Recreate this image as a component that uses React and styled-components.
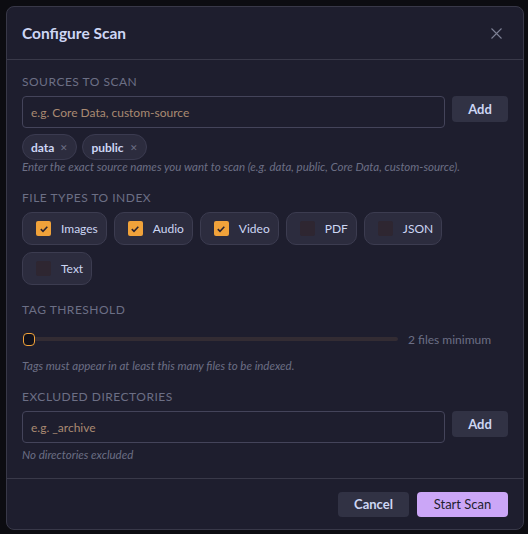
import React from 'react'
import styled, { createGlobalStyle } from 'styled-components'

const GlobalStyle = createGlobalStyle`
    html, body {
        margin: 0;
        padding: 0;
        background: #0c0c11;
    }
    body {
        font-family: Lato, "Liberation Sans", sans-serif;
        color: #cdd6f4;
    }
`

const sources = ['data', 'public']

const fileTypes = [
    { label: 'Images', checked: true },
    { label: 'Audio', checked: true },
    { label: 'Video', checked: true },
    { label: 'PDF', checked: false },
    { label: 'JSON', checked: false },
    { label: 'Text', checked: false },
]

const App = () => {
    return (
        <>
            <GlobalStyle />
            <Page>
                <Modal>
                    <Header>
                        <h2>Configure Scan</h2>
                        <CloseButton aria-label="Close">
                            <svg width="11" height="11" viewBox="0 0 11 11">
                                <path d="M0.5 0.5L10.5 10.5M10.5 0.5L0.5 10.5" stroke="currentColor" strokeWidth="1.1" fill="none" />
                            </svg>
                        </CloseButton>
                    </Header>

                    <Body>
                        <Section>
                            <Label>Sources to scan</Label>
                            <InputRow>
                                <TextInput placeholder="e.g. Core Data, custom-source" />
                                <SmallButton>Add</SmallButton>
                            </InputRow>
                            <Chips>
                                {sources.map(s => (
                                    <Chip key={s}>
                                        {s}
                                        <span>&#x2715;</span>
                                    </Chip>
                                ))}
                            </Chips>
                            <Hint $tight>Enter the exact source names you want to scan (e.g. data, public, Core Data, custom-source).</Hint>
                        </Section>

                        <Section>
                            <Label>File types to index</Label>
                            <Toggles>
                                {fileTypes.map(t => (
                                    <Toggle key={t.label}>
                                        <Box $checked={t.checked}>
                                            {t.checked && (
                                                <svg width="10" height="10" viewBox="0 0 10 10">
                                                    <path d="M1.8 5.2L4 7.3L8.3 2.8" stroke="#2a2230" strokeWidth="1.6" fill="none" />
                                                </svg>
                                            )}
                                        </Box>
                                        {t.label}
                                    </Toggle>
                                ))}
                            </Toggles>
                        </Section>

                        <Section>
                            <Label>Tag threshold</Label>
                            <SliderRow>
                                <Slider>
                                    <Thumb />
                                    <Track />
                                </Slider>
                                <SliderValue>2 files minimum</SliderValue>
                            </SliderRow>
                            <Hint>Tags must appear in at least this many files to be indexed.</Hint>
                        </Section>

                        <Section>
                            <Label>Excluded directories</Label>
                            <InputRow>
                                <TextInput placeholder="e.g. _archive" />
                                <SmallButton>Add</SmallButton>
                            </InputRow>
                            <Hint>No directories excluded</Hint>
                        </Section>
                    </Body>

                    <Footer>
                        <FooterButton>Cancel</FooterButton>
                        <FooterButton $primary>Start Scan</FooterButton>
                    </Footer>
                </Modal>
            </Page>
        </>
    )
}

const Page = styled.div`
    width: 528px;
    height: 534px;
    padding: 6px 4px 4px 6px;
    box-sizing: border-box;
`

const Modal = styled.div`
    width: 518px;
    height: 524px;
    box-sizing: border-box;
    background: #1e1e2e;
    border: 1px solid #383848;
    border-radius: 8px;
    display: flex;
    flex-direction: column;
    overflow: hidden;
`

const Header = styled.div`
    height: 53px;
    box-sizing: border-box;
    padding: 0 21px 0 15px;
    display: flex;
    align-items: center;
    justify-content: space-between;
    border-bottom: 1px solid #393949;

    h2 {
        margin: 0;
        font-size: 15.5px;
        font-weight: 700;
        color: #cdd6f4;
    }
`

const CloseButton = styled.button`
    background: none;
    border: none;
    padding: 0;
    color: #7c7f93;
    display: flex;
    cursor: pointer;
`

const Body = styled.div`
    flex: 1;
    padding: 14px 15px 0;
    display: flex;
    flex-direction: column;
    gap: 17px;
`

const Section = styled.div`
    display: flex;
    flex-direction: column;
    gap: 6px;
`

const Label = styled.div`
    font-size: 12px;
    line-height: 16px;
    text-transform: uppercase;
    letter-spacing: 0.5px;
    color: #6c6f85;
`

const InputRow = styled.div`
    display: flex;
    align-items: flex-start;
    gap: 7px;
`

const TextInput = styled.input`
    flex: 1;
    height: 32px;
    box-sizing: border-box;
    background: #1e1e2e;
    border: 1px solid #44445a;
    border-radius: 4px;
    padding: 0 8px;
    font-family: Lato, "Liberation Sans", sans-serif;
    font-size: 12px;
    color: #cdd6f4;
    outline: none;

    &::placeholder {
        color: #a98a72;
    }
`

const SmallButton = styled.button`
    width: 56px;
    height: 26px;
    border: none;
    border-radius: 4px;
    background: #313244;
    color: #cdd6f4;
    font-family: Lato, "Liberation Sans", sans-serif;
    font-size: 13px;
    font-weight: 700;
    cursor: pointer;
`

const Chips = styled.div`
    display: flex;
    gap: 5px;
`

const Chip = styled.div`
    height: 26px;
    box-sizing: border-box;
    padding: 0 8px;
    display: flex;
    align-items: center;
    gap: 6px;
    background: #2c2c3e;
    border: 1px solid #3b3b50;
    border-radius: 13px;
    font-size: 12px;
    font-weight: 700;
    color: #cdd6f4;

    span {
        font-size: 9px;
        font-weight: 400;
        color: #6c6f85;
    }
`

const Hint = styled.div`
    font-size: 11.5px;
    line-height: 12px;
    font-style: italic;
    color: #6c6f85;
    margin-top: ${p => (p.$tight ? '-5px' : '0')};
`

const Toggles = styled.div`
    display: flex;
    flex-wrap: wrap;
    gap: 7px;
`

const Toggle = styled.label`
    height: 33px;
    box-sizing: border-box;
    padding: 0 8px 0 13px;
    display: flex;
    align-items: center;
    gap: 10px;
    background: #2c2c3e;
    border: 1px solid #3c3c50;
    border-radius: 10px;
    font-size: 12px;
    color: #cdd6f4;
`

const Box = styled.span`
    width: 15px;
    height: 15px;
    border-radius: 2px;
    display: flex;
    align-items: center;
    justify-content: center;
    background: ${p => (p.$checked ? '#f0a23a' : '#2e2631')};
`

const SliderRow = styled.div`
    display: flex;
    align-items: center;
    gap: 10px;
    height: 30px;
`

const Slider = styled.div`
    flex: 1;
    display: flex;
    align-items: center;
    padding-left: 1px;
`

const Thumb = styled.div`
    width: 12px;
    height: 13px;
    box-sizing: border-box;
    border: 1.5px solid #f0a23a;
    border-radius: 4px;
    background: #11111b;
`

const Track = styled.div`
    flex: 1;
    height: 4px;
    background: #332c33;
    border-radius: 0 2px 2px 0;
`

const SliderValue = styled.div`
    font-size: 12px;
    color: #6c6f85;
    width: 100px;
`

const Footer = styled.div`
    height: 51px;
    box-sizing: border-box;
    border-top: 1px solid #393949;
    padding: 0 15px;
    display: flex;
    align-items: center;
    justify-content: flex-end;
    gap: 8px;
`

const FooterButton = styled.button`
    height: 25px;
    padding: 0 16px;
    min-width: ${p => (p.$primary ? '91px' : '71px')};
    border: none;
    border-radius: 4px;
    background: ${p => (p.$primary ? '#cba6f7' : '#313244')};
    color: ${p => (p.$primary ? '#1e1e2e' : '#cdd6f4')};
    font-family: Lato, "Liberation Sans", sans-serif;
    font-size: 13px;
    font-weight: ${p => (p.$primary ? 400 : 700)};
    cursor: pointer;
`

export default App
